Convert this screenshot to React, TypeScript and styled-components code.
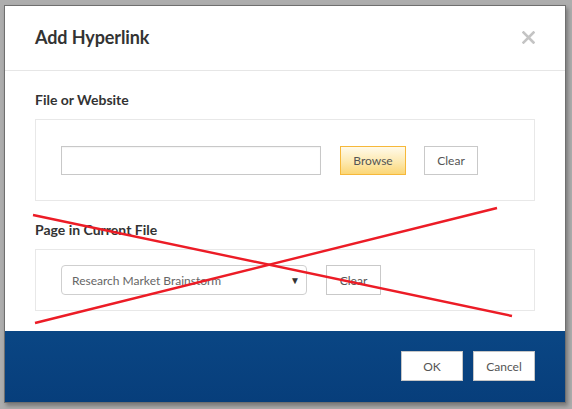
import React from "react";
import styled, { createGlobalStyle } from "styled-components";

const Global = createGlobalStyle`
  html, body { margin: 0; padding: 0; }
  body {
    background: #adadad;
    font-family: "Lato", "Liberation Sans", sans-serif;
    width: 572px;
    height: 409px;
    overflow: hidden;
  }
  * { box-sizing: border-box; }
`;

const Stage = styled.div`
  position: relative;
  width: 572px;
  height: 409px;
  padding: 5px 0 0 4px;
`;

const Dialog = styled.div`
  width: 562px;
  height: 398px;
  background: #fff;
  border: 1px solid #6f6f6f;
  box-shadow: 2px 3px 4px rgba(0, 0, 0, 0.3);
  display: flex;
  flex-direction: column;
`;

const Header = styled.div`
  height: 65px;
  flex: none;
  border-bottom: 1px solid #e6e6e6;
  display: flex;
  align-items: center;
  justify-content: space-between;
  padding: 0 30px 2px 30px;
`;

const Title = styled.h1`
  margin: 0;
  font-size: 18px;
  font-weight: 700;
  color: #333;
  letter-spacing: -0.1px;
`;

const Close = styled.button`
  border: none;
  background: none;
  padding: 0;
  width: 14px;
  height: 14px;
  display: flex;
  align-items: center;
  justify-content: center;
`;

const Body = styled.div`
  flex: 1;
  padding: 20px 30px 0 30px;
  display: flex;
  flex-direction: column;
`;

const Label = styled.div<{ $top?: number }>`
  font-size: 14px;
  font-weight: 700;
  color: #333;
  height: 18px;
  line-height: 18px;
  margin-top: ${(p) => p.$top ?? 0}px;
  margin-bottom: 10px;
`;

const Panel = styled.div<{ $h: number; $pt: number }>`
  height: ${(p) => p.$h}px;
  flex: none;
  border: 1px solid #e8e8e8;
  padding: ${(p) => p.$pt}px 25px 0 25px;
  display: flex;
  align-items: flex-start;
`;

const TextInput = styled.input`
  width: 260px;
  height: 29px;
  border: 1px solid #c8c8c8;
  border-radius: 0;
  padding: 0 8px;
  font-family: inherit;
  font-size: 12px;
  outline: none;
  box-shadow: inset 0 1px 1px rgba(0, 0, 0, 0.04);
`;

const Button = styled.button<{ $w: number; $h?: number; $primary?: boolean; $ml?: number }>`
  width: ${(p) => p.$w}px;
  height: ${(p) => p.$h ?? 29}px;
  margin-left: ${(p) => p.$ml ?? 0}px;
  border: 1px solid ${(p) => (p.$primary ? "#f6b83a" : "#c9c9c9")};
  background: ${(p) =>
    p.$primary ? "linear-gradient(#fffaea, #fde9b0 55%, #fbd676)" : "#fff"};
  font-family: inherit;
  font-size: 12px;
  color: #555;
  padding: 0;
  cursor: pointer;
`;

const Select = styled.div`
  width: 246px;
  height: 30px;
  border: 1px solid #cfcfcf;
  border-radius: 4px;
  display: flex;
  align-items: center;
  justify-content: space-between;
  padding: 0 6px 0 10px;
  font-size: 12px;
  color: #666;
`;

const Caret = styled.span`
  font-size: 10px;
  color: #333;
`;

const Footer = styled.div`
  height: 71px;
  flex: none;
  background: linear-gradient(#0a4684, #073e7b);
  display: flex;
  justify-content: flex-end;
  align-items: flex-start;
  gap: 10px;
  padding: 20px 30px 0 0;
`;

const FooterButton = styled.button<{ $w: number }>`
  width: ${(p) => p.$w}px;
  height: 30px;
  border: 1px solid #c6c6c6;
  background: #fff;
  font-family: inherit;
  font-size: 12px;
  color: #555;
  padding: 0;
`;

const Overlay = styled.svg`
  position: absolute;
  left: 0;
  top: 0;
  pointer-events: none;
`;

export default function App() {
  return (
    <>
      <Global />
      <Stage>
        <Dialog>
          <Header>
            <Title>Add Hyperlink</Title>
            <Close aria-label="Close">
              <svg width="13" height="13" viewBox="0 0 13 13">
                <path d="M1.5 1.5 L11.5 11.5 M11.5 1.5 L1.5 11.5" stroke="#c4c4c4" strokeWidth="2.6" strokeLinecap="square" />
              </svg>
            </Close>
          </Header>
          <Body>
            <Label>File or Website</Label>
            <Panel $h={82} $pt={26}>
              <TextInput />
              <Button $w={66} $primary $ml={19}>Browse</Button>
              <Button $w={54} $ml={18}>Clear</Button>
            </Panel>
            <Label $top={20}>Page in Current File</Label>
            <Panel $h={62} $pt={15}>
              <Select>
                <span>Research Market Brainstorm</span>
                <Caret>▼</Caret>
              </Select>
              <Button $w={55} $h={30} $ml={19}>Clear</Button>
            </Panel>
          </Body>
          <Footer>
            <FooterButton $w={62}>OK</FooterButton>
            <FooterButton $w={62}>Cancel</FooterButton>
          </Footer>
        </Dialog>
        <Overlay width="572" height="409" viewBox="0 0 572 409">
          <line x1="33" y1="215" x2="512" y2="316" stroke="#ec1c26" strokeWidth="2.4" />
          <line x1="35" y1="323" x2="497" y2="208" stroke="#ec1c26" strokeWidth="2.4" />
        </Overlay>
      </Stage>
    </>
  );
}
